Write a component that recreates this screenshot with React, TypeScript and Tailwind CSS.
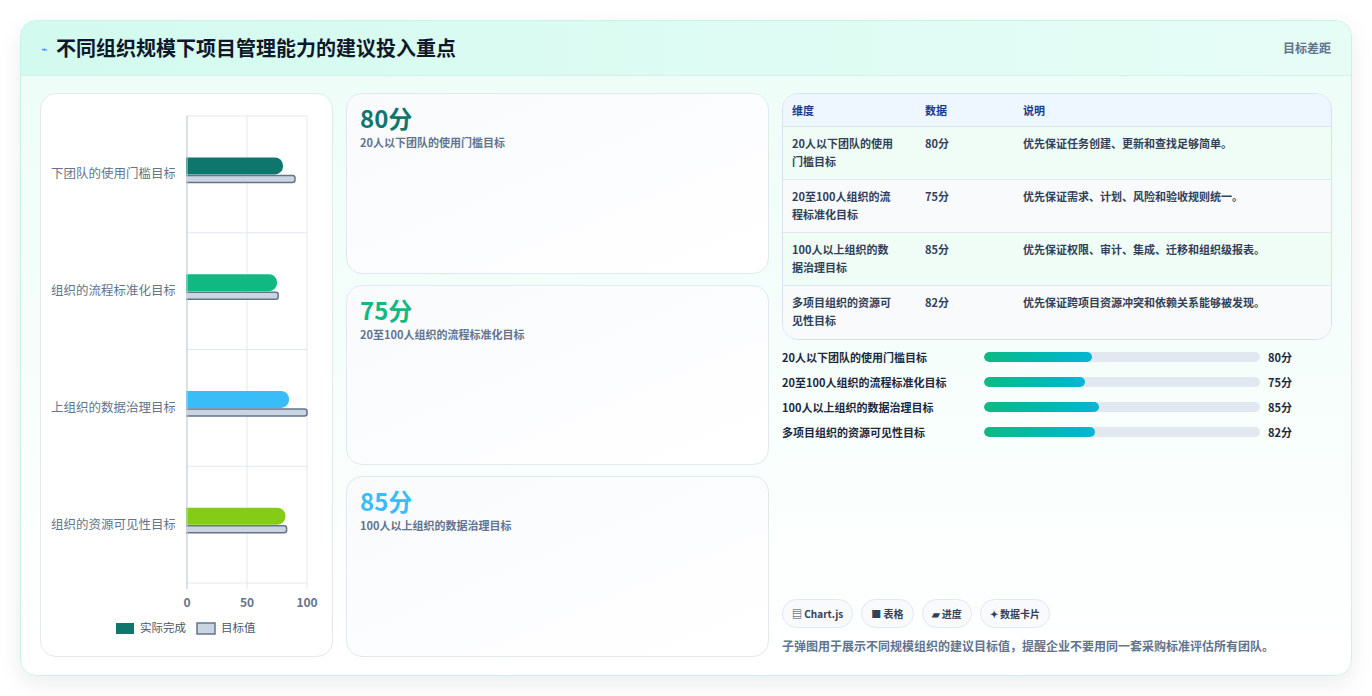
import React from "react";

const cats = [
  { label: "20人以下团队的使用门槛目标", v: 80, t: 90, c: "#0f766e", desc: "优先保证任务创建、更新和查找足够简单。" },
  { label: "20至100人组织的流程标准化目标", v: 75, t: 76, c: "#10b981", desc: "优先保证需求、计划、风险和验收规则统一。" },
  { label: "100人以上组织的数据治理目标", v: 85, t: 100, c: "#38bdf8", desc: "优先保证权限、审计、集成、迁移和组织级报表。" },
  { label: "多项目组织的资源可见性目标", v: 82, t: 83, c: "#84cc16", desc: "优先保证跨项目资源冲突和依赖关系能够被发现。" },
];
const tableLabels = [
  ["20人以下团队的使用", "门槛目标"],
  ["20至100人组织的流", "程标准化目标"],
  ["100人以上组织的数", "据治理目标"],
  ["多项目组织的资源可", "见性目标"],
];

function Chart() {
  const x0 = 136, w = 120, y0 = 22, rowH = 116.75;
  return (
    <svg width="282" height="560" className="block">
      {[0, 1, 2, 3, 4].map((i) => (
        <line key={"h" + i} x1={x0 - 8} x2={x0 + w} y1={y0 + i * rowH} y2={y0 + i * rowH} stroke="#e2e8f0" />
      ))}
      {[0, 1, 2].map((i) => (
        <line key={"v" + i} x1={x0 + i * 60} x2={x0 + i * 60} y1={y0} y2={y0 + 4 * rowH + 6} stroke={i === 0 ? "#cbd5e1" : "#e2e8f0"} />
      ))}
      {cats.map((c, i) => {
        const cy = y0 + i * rowH + rowH / 2;
        return (
          <g key={i}>
            <text x={125} y={cy + 4} textAnchor="end" fontSize="12.5" fill="#64748b">{c.label}</text>
            <rect x={x0 - 10} y={cy - 17} width={c.v * 1.2 + 10} height={17} rx={8} fill={c.c} />
            <rect x={x0 - 6} y={cy + 1} width={c.t * 1.2 + 6} height={7} rx={2.5} fill="#cbd5e1" stroke="#64748b" strokeWidth="1.5" />
          </g>
        );
      })}
      <rect x={x0 - 12} y={y0 - 2} width={11} height={4 * rowH + 12} fill="white" />
      <line x1={x0} x2={x0} y1={y0} y2={y0 + 4 * rowH + 6} stroke="#cbd5e1" />
      {[0, 50, 100].map((n, i) => (
        <text key={n} x={x0 + i * 60} y={y0 + 4 * rowH + 24} textAnchor="middle" fontSize="12" fontWeight="700" fill="#64748b">{n}</text>
      ))}
      <rect x={65} y={529} width={18} height={11} fill="#0f766e" />
      <text x={89} y={538} fontSize="11.5" fill="#475569">实际完成</text>
      <rect x={146} y={529} width={18} height={11} fill="#cbd5e1" stroke="#64748b" strokeWidth="1.5" />
      <text x={170} y={538} fontSize="11.5" fill="#475569">目标值</text>
    </svg>
  );
}

export default function App() {
  return (
    <div className="w-[1372px] h-[696px] bg-white p-5 pb-0" style={{ fontFamily: '"Noto Sans CJK SC", "Noto Sans", sans-serif' }}>
      <div className="h-[656px] rounded-2xl border border-[#c9f3e4] bg-gradient-to-b from-[#ecfdf7] to-white shadow-[0_8px_24px_rgba(15,23,42,0.08)] overflow-hidden flex flex-col">
        <div className="h-[55px] shrink-0 flex items-center justify-between px-5 bg-gradient-to-r from-[#d3faee] to-[#e6fdf6] border-b border-[#d5f0e8]">
          <div className="flex items-center gap-2">
            <span className="text-[11px] text-blue-500">⌁</span>
            <h1 className="text-[20px] font-bold text-slate-900">不同组织规模下项目管理能力的建议投入重点</h1>
          </div>
          <span className="text-xs font-semibold text-slate-500">目标差距</span>
        </div>
        <div className="flex-1 flex gap-[13px] px-[19px] pt-[17px] pb-[18px]">
          <div className="w-[293px] shrink-0 bg-white rounded-2xl border border-[#e2e8f0] overflow-hidden pl-[10px]">
            <Chart />
          </div>
          <div className="w-[423px] shrink-0 flex flex-col gap-[11px]">
            {cats.slice(0, 3).map((c) => (
              <div key={c.label} className="flex-1 rounded-2xl border border-[#e2e8f0] bg-gradient-to-br from-[#f8fafc] to-white px-[13px] pt-[8px]">
                <div className="text-[24px] font-bold leading-[32px]" style={{ color: c.c }}>{c.v}分</div>
                <div className="text-[11px] font-bold text-slate-500">{c.label}</div>
              </div>
            ))}
          </div>
          <div className="flex-1 flex flex-col">
            <div className="rounded-2xl border border-[#d7e2ee] overflow-hidden bg-white">
              <div className="h-[33px] flex items-center bg-[#eef6ff] border-b border-[#d7e2ee] text-[11px] font-semibold text-[#1e3a8a]">
                <div className="w-[142px] pl-[9px]">维度</div>
                <div className="w-[98px]">数据</div>
                <div>说明</div>
              </div>
              {cats.map((c, i) => (
                <div key={i} className={`h-[53px] flex pt-[7px] text-[11px] font-semibold text-slate-700 leading-[18px] ${i < 3 ? "border-b border-[#e2e8f0]" : ""} ${i % 2 === 0 ? "bg-[#f0fdf6]" : "bg-[#f8fafc]"}`}>
                  <div className="w-[142px] pl-[9px]">{tableLabels[i][0]}<br />{tableLabels[i][1]}</div>
                  <div className="w-[98px]">{c.v}分</div>
                  <div>{c.desc}</div>
                </div>
              ))}
            </div>
            <div className="mt-[8px] flex flex-col gap-[7px]">
              {cats.map((c) => (
                <div key={c.label} className="h-[18px] flex items-center text-[11px] font-bold text-slate-800">
                  <div className="w-[202px]">{c.label}</div>
                  <div className="w-[276px] h-[10px] rounded-full bg-[#e2e8f0] overflow-hidden">
                    <div className="h-full rounded-full bg-gradient-to-r from-[#10b981] to-[#06b6d4]" style={{ width: `${c.v * 0.49}%` }} />
                  </div>
                  <div className="ml-[8px]">{c.v}分</div>
                </div>
              ))}
            </div>
            <div className="flex-1" />
            <div className="flex gap-2 text-[10px] font-bold text-slate-700">
              {["▤ Chart.js", "■ 表格", "▰ 进度", "✦ 数据卡片"].map((t) => (
                <span key={t} className="h-[29px] flex items-center px-[9px] rounded-full border border-[#e2e8f0] bg-[#f8fafc]">{t}</span>
              ))}
            </div>
            <p className="mt-[9px] mb-[2px] text-[12px] font-semibold text-slate-500">子弹图用于展示不同规模组织的建议目标值，提醒企业不要用同一套采购标准评估所有团队。</p>
          </div>
        </div>
      </div>
    </div>
  );
}
